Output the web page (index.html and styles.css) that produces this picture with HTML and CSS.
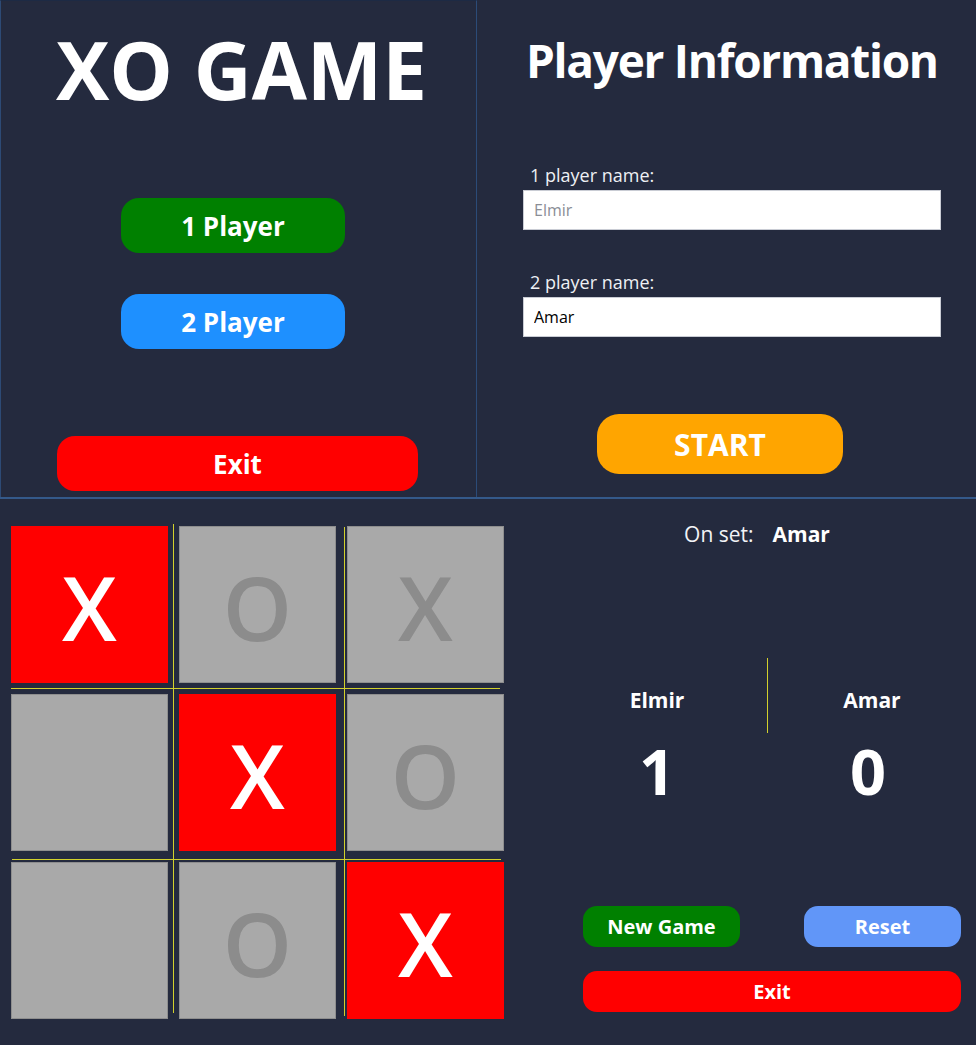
FILE: index.html
```html
<!DOCTYPE html>
<html>
<head>
<meta charset="utf-8">
<title>XO Game</title>
<link rel="stylesheet" href="styles.css">
</head>
<body>
<div class="top">
  <section class="menu">
    <h1 class="menu-title">XO GAME</h1>
    <button class="btn btn-green btn-mode">1 Player</button>
    <button class="btn btn-blue btn-mode btn-mode2">2 Player</button>
    <button class="btn btn-red btn-menu-exit">Exit</button>
  </section>
  <section class="info">
    <h2 class="info-title">Player Information</h2>
    <label class="field-label field-label1">1 player name:</label>
    <input class="field-input" type="text" placeholder="Elmir">
    <label class="field-label field-label2">2 player name:</label>
    <input class="field-input" type="text" value="Amar">
    <button class="btn btn-orange btn-start">START</button>
  </section>
</div>
<div class="game">
  <div class="board-wrap">
    <div class="board">
      <div class="cell cell-red">X</div>
      <div class="cell cell-grey">O</div>
      <div class="cell cell-grey">X</div>
      <div class="cell cell-grey"></div>
      <div class="cell cell-red">X</div>
      <div class="cell cell-grey">O</div>
      <div class="cell cell-grey"></div>
      <div class="cell cell-grey">O</div>
      <div class="cell cell-red">X</div>
    </div>
    <span class="gridline vline v1"></span>
    <span class="gridline vline v2"></span>
    <span class="gridline hline h1"></span>
    <span class="gridline hline h2"></span>
  </div>
  <div class="side">
    <div class="onset"><span class="onset-label">On set:</span><span class="onset-name">Amar</span></div>
    <div class="scores">
      <div class="score-name">Elmir</div>
      <div class="score-divider"></div>
      <div class="score-name">Amar</div>
      <div class="score-value">1</div>
      <div class="score-gap"></div>
      <div class="score-value score-right">0</div>
    </div>
    <div class="actions">
      <div class="actions-row">
        <button class="btn btn-green btn-small">New Game</button>
        <button class="btn btn-cornflower btn-small">Reset</button>
      </div>
      <button class="btn btn-red btn-small btn-wide">Exit</button>
    </div>
  </div>
</div>
</body>
</html>
```

FILE: styles.css
```css
* { box-sizing: border-box; }

html, body {
  margin: 0;
  padding: 0;
  background: #242a3e;
  font-family: "Open Sans", "Noto Sans", sans-serif;
  color: #ffffff;
}

body {
  width: 976px;
  height: 1045px;
  overflow: hidden;
}

/* ---------- top area ---------- */
.top {
  display: flex;
  height: 499px;
  border-bottom: 2px solid #34598a;
}

.menu {
  width: 477px;
  display: flex;
  flex-direction: column;
  border-left: 1px solid #2d4a75;
  border-right: 1px solid #2b4b78;
  border-top: 1px solid #1d2a44;
}

.menu-title {
  margin: 28px 0 0 0;
  font-size: 80px;
  line-height: 1;
  font-weight: 700;
  text-align: center;
  padding-left: 6px;
}

.btn {
  font-family: "Open Sans", "Noto Sans", sans-serif;
  font-weight: 700;
  color: #ffffff;
  border: none;
  padding: 0;
  cursor: pointer;
}

.btn-green { background: #008000; }
.btn-blue { background: #1e90ff; }
.btn-red { background: #ff0000; }
.btn-orange { background: #ffa500; }
.btn-cornflower { background: #6196f8; }

.btn-mode {
  align-self: flex-start;
  margin-left: 120px;
  margin-top: 89px;
  width: 224px;
  height: 55px;
  border-radius: 18px;
  font-size: 26px;
}

.btn-mode2 {
  margin-top: 41px;
}

.btn-menu-exit {
  align-self: flex-start;
  margin-left: 56px;
  margin-top: 87px;
  width: 361px;
  height: 55px;
  border-radius: 18px;
  font-size: 26px;
}

.info {
  flex: 1;
  display: flex;
  flex-direction: column;
  padding-left: 46px;
}

.info-title {
  margin: 37px 0 0 0;
  font-size: 46px;
  line-height: 1;
  font-weight: 700;
  letter-spacing: -1.3px;
  padding-left: 3px;
  white-space: nowrap;
}

.field-label {
  display: block;
  font-size: 18px;
  line-height: 24px;
  color: #eef0f4;
  padding-left: 7px;
}

.field-label1 { margin-top: 80px; }
.field-label2 { margin-top: 40px; }

.field-input {
  display: block;
  width: 418px;
  height: 40px;
  margin-top: 3px;
  border: 1px solid #c9ccd4;
  background: #ffffff;
  padding: 0 10px;
  font-family: "Open Sans", "Noto Sans", sans-serif;
  font-size: 16px;
  color: #000000;
  outline: none;
}

.field-input::placeholder {
  color: #8a8d96;
}

.btn-start {
  align-self: flex-start;
  margin-left: 74px;
  margin-top: 77px;
  width: 246px;
  height: 60px;
  border-radius: 22px;
  font-size: 30px;
}

/* ---------- game area ---------- */
.game {
  display: flex;
  height: 546px;
}

.board-wrap {
  position: relative;
  width: 547px;
  padding: 27px 0 0 11px;
}

.board {
  display: grid;
  grid-template-columns: repeat(3, 157px);
  grid-template-rows: repeat(3, 157px);
  column-gap: 11px;
  row-gap: 11px;
}

.cell {
  display: flex;
  align-items: center;
  justify-content: center;
  font-size: 88px;
  line-height: 1;
  font-weight: 600;
  padding-top: 4px;
}

.cell-red {
  background: #ff0000;
  color: #ffffff;
}

.cell-grey {
  background: #a9a9a9;
  color: #8c8c8c;
  border: 1px solid #8e8e8e;
}

.gridline {
  position: absolute;
  background: #d2d02c;
}

.vline { width: 1px; }
.hline { height: 1px; }

.v1 { left: 173px; top: 25px; height: 489px; }
.v2 { left: 344px; top: 28px; height: 489px; }
.h1 { top: 189px; left: 11px; width: 489px; }
.h2 { top: 360px; left: 12px; width: 489px; }

.side {
  flex: 1;
  display: flex;
  flex-direction: column;
}

.onset {
  display: flex;
  justify-content: center;
  gap: 19px;
  margin-top: 21px;
  padding-right: 9px;
  font-size: 21px;
  line-height: 28px;
}

.onset-label {
  font-weight: 400;
  color: #f2f3f6;
}

.onset-name {
  font-weight: 700;
}

.scores {
  display: grid;
  grid-template-columns: 220px 1px 208px;
  grid-template-rows: 75px auto;
  margin-top: 110px;
}

.score-name {
  font-size: 21px;
  line-height: 28px;
  font-weight: 700;
  text-align: center;
  padding-top: 28px;
}

.score-divider {
  background: #d2d02c;
}

.score-value {
  margin-top: 6px;
  font-size: 63px;
  line-height: 1;
  font-weight: 700;
  text-align: center;
}

.score-right {
  padding-right: 8px;
}

.actions {
  margin-top: 104px;
  padding: 0 15px 0 36px;
  display: flex;
  flex-direction: column;
  gap: 24px;
}

.actions-row {
  display: flex;
  justify-content: space-between;
}

.btn-small {
  width: 157px;
  height: 41px;
  border-radius: 14px;
  font-size: 20px;
}

.btn-wide {
  width: 100%;
}
```
